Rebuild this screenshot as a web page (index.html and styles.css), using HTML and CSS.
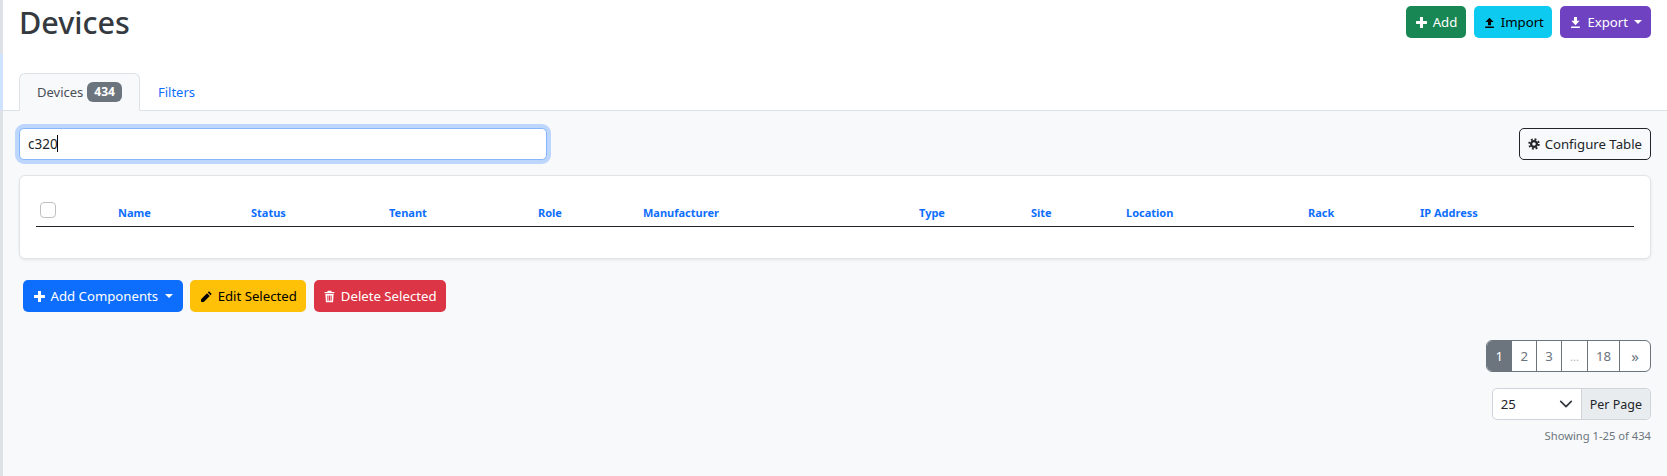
FILE: index.html
```html
<!doctype html>
<html>

<head>
    <meta charset="UTF-8">
    <meta name="viewport" content="width=device-width, initial-scale=1.0">
    <link rel="stylesheet" href="styles.css">
    <title>Devices</title>
</head>

<body>
    <div class="rail"></div>
    <div class="page">
        <div class="page-top">
            <div class="title-row">
                <h1>Devices</h1>
                <div class="actions">
                    <a class="btn btn-green" href="#">
                        <svg class="icon" viewBox="0 0 12 12"><path d="M4.600 1h2.800v3.600H11v2.800H7.400V11H4.600V7.400H1V4.600h3.600z" /></svg>
                        Add
                    </a>
                    <a class="btn btn-cyan" href="#">
                        <svg class="icon" viewBox="0 0 12 12"><path d="M6 1.500 9.800 5.600H7.400v3H4.600v-3H2.200zM2 9.600h8v1.400H2z" /></svg>
                        Import
                    </a>
                    <a class="btn btn-purple" href="#">
                        <svg class="icon" viewBox="0 0 12 12"><path d="M4.600 1h2.800v3.400h2.400L6 8.500 2.200 4.400h2.400zM2 9.600h8v1.400H2z" /></svg>
                        Export <span class="caret caret-tight"></span>
                    </a>
                </div>
            </div>
            <div class="tabs">
                <a class="tab active" href="#">Devices <span class="badge">434</span></a>
                <a class="tab" href="#">Filters</a>
            </div>
        </div>

        <div class="content">
            <div class="search-row">
                <div class="search-wrap">
                    <input class="search" type="text" value="c320">
                    <span class="text-cursor"></span>
                </div>
                <a class="btn btn-outline" href="#">
                    <svg class="icon" viewBox="0 0 14 14">
                        <circle cx="7" cy="7" r="3.400" fill="none" stroke="currentColor" stroke-width="2.600" />
                        <circle cx="7" cy="7" r="5.600" fill="none" stroke="currentColor" stroke-width="2.200" stroke-dasharray="2.200 2.200" />
                    </svg>
                    Configure Table
                </a>
            </div>

            <div class="card">
                <div class="table-head">
                    <div><span class="checkbox"></span></div>
                    <a href="#">Name</a>
                    <a href="#">Status</a>
                    <a href="#">Tenant</a>
                    <a href="#">Role</a>
                    <a href="#">Manufacturer</a>
                    <a href="#">Type</a>
                    <a href="#">Site</a>
                    <a href="#">Location</a>
                    <a href="#">Rack</a>
                    <a href="#">IP Address</a>
                </div>
            </div>

            <div class="bulk-row">
                <a class="btn btn-blue" href="#">
                    <svg class="icon" viewBox="0 0 12 12"><path d="M4.600 1h2.800v3.600H11v2.800H7.400V11H4.600V7.400H1V4.600h3.600z" /></svg>
                    Add Components <span class="caret"></span>
                </a>
                <a class="btn btn-yellow" href="#">
                    <svg class="icon" viewBox="0 0 12 12"><path d="M8.300 1.200 10.800 3.700 9.700 4.800 7.200 2.300zM6.500 3 9 5.500 3.500 11H1V8.500z" /></svg>
                    Edit Selected
                </a>
                <a class="btn btn-red" href="#">
                    <svg class="icon" viewBox="0 0 12 12"><path fill-rule="evenodd" d="M4.400 .8h3.200l.5 1H10.500v1.300h-9V1.800h2.400zM2.200 3.700h7.600l-.5 7.500H2.700zM4 5v5h1V5zM5.500 5v5h1V5zM7 5v5h1V5z" /></svg>
                    Delete Selected
                </a>
            </div>

            <div class="pager-block">
                <div class="pagination">
                    <a class="page-link current" href="#">1</a>
                    <a class="page-link" href="#">2</a>
                    <a class="page-link" href="#">3</a>
                    <a class="page-link disabled" href="#">...</a>
                    <a class="page-link" href="#">18</a>
                    <a class="page-link next" href="#">»</a>
                </div>
                <div class="per-page">
                    <div class="select">
                        25
                        <svg class="chevron" viewBox="0 0 16 16"><path d="m2 5 6 6 6-6" fill="none" stroke="#343a40" stroke-width="2" stroke-linecap="round" stroke-linejoin="round" /></svg>
                    </div>
                    <div class="per-label">Per Page</div>
                </div>
                <div class="showing">Showing 1-25 of 434</div>
            </div>
        </div>
    </div>
</body>

</html>
```

FILE: styles.css
```css
html {
    height: 100%;
}

body {
    height: 100%;
    margin: 0;
    display: flex;
    font-family: "Noto Sans", "Open Sans", sans-serif;
    font-size: 13.2px;
    color: #212529;
    background-color: #f8f9fa;
}

a {
    text-decoration: none;
}

.rail {
    flex: none;
    width: 3px;
    background: linear-gradient(#dee2e6 54px, #cfe2ff 54px, #cfe2ff 110px, #dee2e6 110px);
}

.page {
    flex: 1;
    min-width: 0;
}

.page-top {
    background-color: #fff;
    height: 111px;
    border-bottom: 1px solid #dee2e6;
    box-sizing: border-box;
    padding: 0 16px;
    display: flex;
    flex-direction: column;
    justify-content: space-between;
}

.title-row {
    display: flex;
    justify-content: space-between;
    align-items: flex-start;
}

h1 {
    margin: 0;
    font-size: 30.5px;
    font-weight: 500;
    line-height: 44px;
    color: #343a40;
}

.actions {
    display: flex;
    gap: 8px;
    padding-top: 6px;
}

.btn {
    display: inline-flex;
    align-items: center;
    gap: 5px;
    height: 32px;
    box-sizing: border-box;
    padding: 0 8px;
    border: 1px solid transparent;
    border-radius: 5px;
    color: #fff;
    white-space: nowrap;
}

.icon {
    width: 13px;
    height: 13px;
    fill: currentColor;
    flex: none;
}

.caret {
    display: inline-block;
    margin-left: 2px;
    border-top: 4px solid currentColor;
    border-left: 4px solid transparent;
    border-right: 4px solid transparent;
}

.caret-tight {
    margin-left: 1px;
}

.btn-green {
    background-color: #198754;
}

.btn-cyan {
    background-color: #0dcaf0;
    color: #000;
    padding: 0 7.5px;
}

.btn-purple {
    background-color: #6f42c1;
}

.btn-blue {
    background-color: #0d6efd;
}

.btn-yellow {
    background-color: #ffc107;
    color: #000;
}

.btn-red {
    background-color: #dc3545;
}

.btn-outline {
    border-color: #212529;
    color: #212529;
}

.btn-outline .icon {
    width: 12px;
    height: 12px;
}

.tabs {
    display: flex;
    margin-bottom: -1px;
}

.tab {
    display: flex;
    align-items: center;
    gap: 4px;
    height: 38px;
    box-sizing: border-box;
    padding: 0 17px;
    border: 1px solid transparent;
    color: #0d6efd;
    font-size: 13px;
}

.tab.active {
    color: #495057;
    background-color: #f8f9fa;
    border-color: #dee2e6 #dee2e6 #f8f9fa;
    border-radius: 6px 6px 0 0;
}

.badge {
    background-color: #6c757d;
    color: #fff;
    font-size: 12px;
    font-weight: 700;
    line-height: 20px;
    padding: 0 7px;
    border-radius: 6px;
}

.content {
    padding: 17px 16px 0;
}

.search-row {
    display: flex;
    justify-content: space-between;
    align-items: center;
}

.search-wrap {
    position: relative;
    display: flex;
}

.search {
    width: 528px;
    height: 32px;
    box-sizing: border-box;
    padding: 0 8px;
    border: 1px solid #86b7fe;
    border-radius: 5px;
    box-shadow: 0 0 0 4px #bcd6fd;
    outline: none;
    font-family: inherit;
    font-size: 13.5px;
    color: #212529;
}

.text-cursor {
    position: absolute;
    left: 38px;
    top: 7px;
    width: 1px;
    height: 17px;
    background-color: #000;
}

.card {
    margin-top: 15px;
    height: 84px;
    box-sizing: border-box;
    padding: 20px 16px 0;
    background-color: #fff;
    border: 1px solid #e3e4e6;
    border-radius: 6px;
    box-shadow: 0 1px 3px rgba(0, 0, 0, 0.08);
}

.table-head {
    display: grid;
    grid-template-columns: 82px 133px 138px 149px 105px 276px 112px 95px 182px 112px 1fr;
    align-items: end;
    height: 25px;
    padding-bottom: 5px;
    border-bottom: 1px solid #212529;
    font-size: 11px;
    font-weight: 700;
    color: #0d6efd;
}

.table-head a {
    color: #0d6efd;
    line-height: 16px;
}

.checkbox {
    display: block;
    width: 16px;
    height: 16px;
    margin: 0 0 3px 4px;
    box-sizing: border-box;
    background-color: #fff;
    border: 1px solid #bfc2c5;
    border-radius: 4px;
}

.bulk-row {
    display: flex;
    gap: 7.5px;
    margin: 21px 0 0 4px;
}

.bulk-row .btn-blue,
.bulk-row .btn-yellow {
    padding: 0 8.5px;
}

.pager-block {
    display: flex;
    flex-direction: column;
    align-items: flex-end;
    margin-top: 28px;
}

.pagination {
    display: flex;
    height: 32px;
    border: 1px solid #6c757d;
    border-radius: 6px;
    box-sizing: border-box;
    overflow: hidden;
    background-color: #fff;
}

.page-link {
    display: flex;
    align-items: center;
    padding: 0 8.2px;
    border-left: 1px solid #6c757d;
    color: #6c757d;
}

.page-link:first-child {
    border-left: 0;
}

.page-link.current {
    background-color: #6c757d;
    color: #fff;
}

.page-link.disabled {
    color: #adb5bd;
    padding: 0 8px;
    font-size: 11px;
}

.page-link.next {
    padding: 0 11px;
    font-size: 15px;
}

.per-page {
    display: flex;
    height: 32px;
    margin-top: 16px;
    border: 1px solid #ced4da;
    border-radius: 5px;
    box-sizing: border-box;
}

.select {
    width: 88px;
    display: flex;
    align-items: center;
    justify-content: space-between;
    box-sizing: border-box;
    padding: 0 8px;
    background-color: #fff;
    border-radius: 5px 0 0 5px;
}

.chevron {
    width: 14px;
    height: 14px;
}

.per-label {
    display: flex;
    align-items: center;
    padding: 0 8px;
    background-color: #e9ecef;
    border-left: 1px solid #ced4da;
    border-radius: 0 5px 5px 0;
    font-size: 12.5px;
}

.showing {
    margin-top: 8px;
    font-size: 11.2px;
    color: #6c757d;
}
```
